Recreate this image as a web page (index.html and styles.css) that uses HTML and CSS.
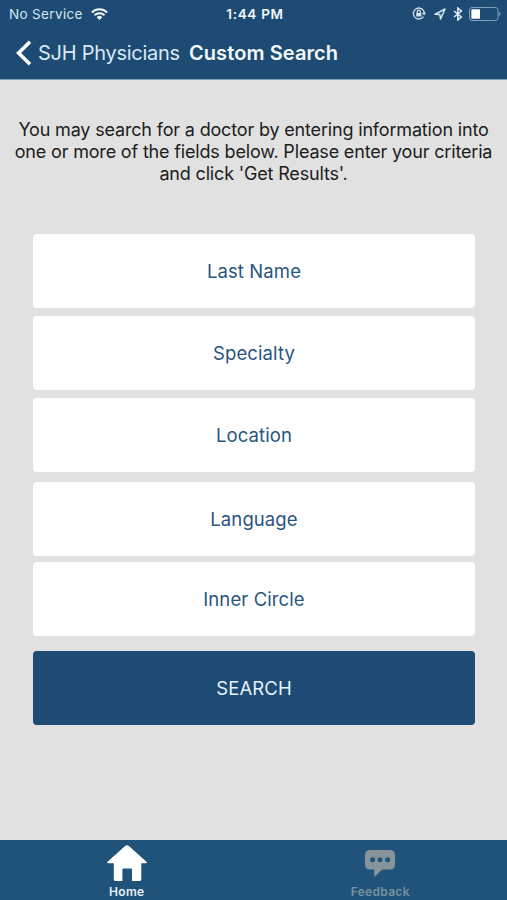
FILE: index.html
```html
<!DOCTYPE html>
<html lang="en">
<head>
  <meta charset="UTF-8" />
  <meta name="viewport" content="width=device-width, initial-scale=1.0"/>
  <title>Custom Search</title>
  <link rel="stylesheet" href="styles.css">
</head>
<body>
  <header>
    <div class="status-bar">
      <div class="carrier">
        <span>No Service</span>
        <svg class="wifi" viewBox="0 0 17 12">
          <path d="M0.9 4.5 A10.8 10.8 0 0 1 16.1 4.5" />
          <path d="M3.5 7.2 A7.1 7.1 0 0 1 13.5 7.2" />
          <path class="dot" d="M8.5 12 L5.7 9.2 A4 4 0 0 1 11.3 9.2 Z" />
        </svg>
      </div>
      <span class="clock">1:44 PM</span>
      <div class="indicators">
        <svg class="lock" viewBox="0 0 14 13">
          <path d="M11.4 3.4 A5.5 5.5 0 1 0 11.4 9.6" />
          <path d="M11.4 3.4 A5.5 5.5 0 0 1 12.2 6" />
          <path class="solid" d="M10 5.8 H14 L12.1 8.6 Z" />
          <rect class="solid" x="4.2" y="5.9" width="5.2" height="3.6" rx="0.5" />
          <path d="M5.3 6 V4.7 A1.5 1.5 0 0 1 8.3 4.7 V6" />
        </svg>
        <svg class="location" viewBox="0 0 12 12">
          <path d="M0.9 6.3 L11 1 L6.6 11 L5.8 6.4 Z" />
        </svg>
        <svg class="bluetooth" viewBox="0 0 10 14">
          <path d="M1 4 L8.4 10 L4.8 13 V1 L8.4 4 L1 10" />
        </svg>
        <svg class="battery" viewBox="0 0 32 14">
          <rect class="shell" x="0.5" y="0.5" width="28.5" height="13" rx="2.5" />
          <rect class="level" x="2.3" y="2.3" width="8.7" height="9.4" rx="0.8" />
          <path class="tip" d="M30.2 4.8 Q31.6 5.4 31.6 7 Q31.6 8.6 30.2 9.2 Z" />
        </svg>
      </div>
    </div>
    <nav class="nav-bar">
      <a class="back" href="#">
        <svg viewBox="0 0 16 26">
          <path d="M14 1.8 L2.6 13 L14 24.2" />
        </svg>
        <span>SJH Physicians</span>
      </a>
      <h1>Custom Search</h1>
    </nav>
  </header>

  <main>
    <p class="intro">
      You may search for a doctor by entering information into<br>
      one or more of the fields below. Please enter your criteria<br>
      and click 'Get Results'.
    </p>
    <form class="search-form">
      <button type="button" class="field">Last Name</button>
      <button type="button" class="field">Specialty</button>
      <button type="button" class="field location-field">Location</button>
      <button type="button" class="field language-field">Language</button>
      <button type="button" class="field">Inner Circle</button>
      <button type="submit" class="btn-search">SEARCH</button>
    </form>
  </main>

  <footer class="tab-bar">
    <a class="tab active" href="#">
      <svg class="home-icon" viewBox="0 0 40 37">
        <path d="M18.4 0.8 Q20 -0.4 21.6 0.8 L39.7 16.9 Q40.3 18.2 38.8 18.2 H34.3 V34.6 Q34.3 36 32.9 36 H25 V24.4 Q25 23.4 24 23.4 H16.4 Q15.4 23.4 15.4 24.4 V36 H8.2 Q6.8 36 6.8 34.6 V18.2 H1.2 Q-0.3 18.2 0.3 16.9 Z" />
      </svg>
      <span>Home</span>
    </a>
    <a class="tab" href="#">
      <svg class="chat-icon" viewBox="0 0 30 27">
        <path d="M5 0 H25 Q30 0 30 5 V14.5 Q30 19.5 25 19.5 H17 L10.3 26.2 Q9.2 26.8 9.2 25.5 V19.5 H5 Q0 19.5 0 14.5 V5 Q0 0 5 0 Z" />
        <circle cx="7.6" cy="9.8" r="2.5" />
        <circle cx="15" cy="9.8" r="2.5" />
        <circle cx="22.6" cy="9.8" r="2.5" />
      </svg>
      <span>Feedback</span>
    </a>
  </footer>
</body>
</html>
```
FILE: styles.css
```css
* {
  margin: 0;
  padding: 0;
  box-sizing: border-box;
}

body {
  height: 900px;
  display: flex;
  flex-direction: column;
  font-family: Inter, 'Liberation Sans', sans-serif;
  background-color: #e1e1e1;
  color: #1c1c1c;
  overflow: hidden;
}

a {
  color: inherit;
  text-decoration: none;
}

header {
  height: 80px;
  background-color: #1d4b73;
  border-bottom: 1px solid #7d9db9;
  color: #f4f9fd;
}

.status-bar {
  display: grid;
  grid-template-columns: 1fr auto 1fr;
  align-items: center;
  height: 27px;
  padding: 0 6px 0 9px;
  font-size: 13.5px;
}

.carrier {
  display: flex;
  align-items: center;
  gap: 8px;
  color: #d5e5f2;
  letter-spacing: 0.35px;
}

.wifi {
  width: 17px;
  height: 12px;
  fill: none;
  stroke: #f4f9fd;
  stroke-width: 2;
}

.wifi .dot {
  fill: #f4f9fd;
  stroke: none;
}

.clock {
  font-weight: 600;
  letter-spacing: 0.7px;
}

.indicators {
  display: flex;
  align-items: center;
  justify-content: flex-end;
}

.lock {
  width: 14px;
  height: 13px;
  margin-right: 8px;
  fill: none;
  stroke: #d5e5f2;
  stroke-width: 1.3;
}

.lock .solid {
  fill: #d5e5f2;
  stroke: none;
}

.location {
  width: 12px;
  height: 12px;
  margin-right: 7px;
  fill: none;
  stroke: #d5e5f2;
  stroke-width: 1.5;
  stroke-linejoin: round;
}

.bluetooth {
  width: 10px;
  height: 14px;
  margin-right: 6px;
  fill: none;
  stroke: #e4eff8;
  stroke-width: 1.5;
}

.battery {
  width: 32px;
  height: 14px;
}

.battery .shell {
  fill: none;
  stroke: #7f9fba;
}

.battery .level {
  fill: #ffffff;
}

.battery .tip {
  fill: #7f9fba;
}

.nav-bar {
  display: flex;
  align-items: center;
  height: 51px;
  padding-left: 16px;
}

.back {
  display: flex;
  align-items: center;
  gap: 6px;
  margin-right: 9px;
  font-size: 20px;
  letter-spacing: -0.26px;
  color: #d9e9f6;
}

.back svg {
  width: 16px;
  height: 26px;
  fill: none;
  stroke: #ffffff;
  stroke-width: 3.6;
}

h1 {
  font-size: 20px;
  font-weight: 600;
  letter-spacing: 0.1px;
}

main {
  flex: 1;
}

.intro {
  padding-top: 39px;
  font-size: 18px;
  line-height: 22px;
  letter-spacing: -0.17px;
  text-align: center;
  white-space: nowrap;
}

.search-form {
  display: flex;
  flex-direction: column;
  padding: 49px 32px 0 33px;
}

.search-form button {
  height: 74px;
  border: none;
  border-radius: 4px;
  font-family: inherit;
  font-size: 18.5px;
  letter-spacing: 0.1px;
  cursor: pointer;
}

.search-form .field {
  margin-bottom: 8px;
  background-color: #ffffff;
  color: #28557f;
}

.search-form .location-field {
  margin-bottom: 10px;
}

.search-form .language-field {
  margin-bottom: 6px;
}

.search-form .btn-search {
  margin-top: 7px;
  background-color: #1d4b73;
  color: #e6f1fa;
}

.tab-bar {
  display: flex;
  height: 60px;
  background-color: #20537a;
}

.tab {
  flex: 1;
  display: flex;
  flex-direction: column;
  align-items: center;
  justify-content: flex-end;
  padding-bottom: 2px;
  font-size: 12px;
  font-weight: 600;
  line-height: 13px;
  letter-spacing: 0.3px;
  color: #78909f;
}

.tab.active {
  color: #e6f1fa;
}

.home-icon {
  width: 40px;
  height: 37px;
  margin-bottom: 3px;
  fill: #ffffff;
}

.chat-icon {
  width: 30px;
  height: 27px;
  margin-bottom: 8px;
  fill: #869399;
}

.chat-icon circle {
  fill: #20537a;
}
```
